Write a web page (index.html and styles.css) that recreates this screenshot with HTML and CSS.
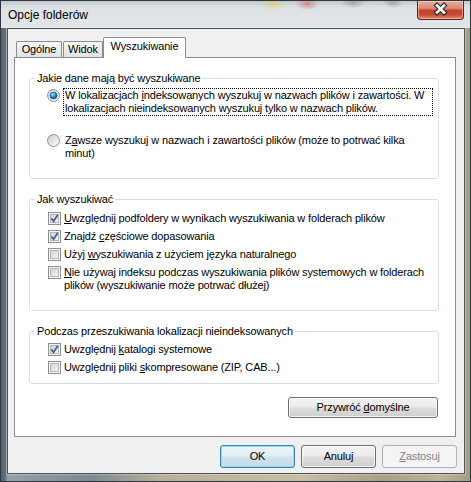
FILE: index.html
```html
<!DOCTYPE html>
<html lang="pl">
<head>
<meta charset="utf-8">
<title>Opcje folderów</title>
<link rel="stylesheet" href="styles.css">
</head>
<body>
<svg class="defs" width="0" height="0" aria-hidden="true">
  <defs>
    <linearGradient id="cbIn" x1="0" y1="0" x2="1" y2="1">
      <stop offset="0" stop-color="#cdd1d6"/>
      <stop offset="1" stop-color="#f7f7f7"/>
    </linearGradient>
    <linearGradient id="rdIn" x1="0" y1="0" x2="1" y2="1">
      <stop offset="0" stop-color="#c9cbcd"/>
      <stop offset="1" stop-color="#fbfbfb"/>
    </linearGradient>
    <radialGradient id="rdDot" cx="0.4" cy="0.35" r="0.7">
      <stop offset="0" stop-color="#b6ecff"/>
      <stop offset="0.45" stop-color="#2f8fd8"/>
      <stop offset="1" stop-color="#0d3f7c"/>
    </radialGradient>
  </defs>
</svg>
<div class="window">
  <div class="titlebar">
    <span class="title">Opcje folderów</span>
    <div class="close">
      <svg width="47" height="19" viewBox="0 0 47 19">
        <path d="M20 5.5 L27 12.5 M27 5.5 L20 12.5" stroke="#2d3034" stroke-width="5" stroke-linecap="square" fill="none"/>
        <path d="M20 5.5 L27 12.5 M27 5.5 L20 12.5" stroke="#ffffff" stroke-width="2.6" stroke-linecap="square" fill="none"/>
      </svg>
    </div>
  </div>
  <div class="frame">
    <div class="client">
      <div class="tabs">
        <div class="tab t-ogolne">Ogólne</div>
        <div class="tab t-widok">Widok</div>
        <div class="tab active t-wysz">Wyszukiwanie</div>
      </div>
      <div class="panel">
        <fieldset class="group g1">
          <legend>Jakie dane mają być wyszukiwane</legend>
          <div class="rrow">
            <svg class="radio" width="13" height="13" viewBox="0 0 13 13">
              <circle cx="6.5" cy="6.5" r="6" fill="url(#rdIn)" stroke="#8f9193"/>
              <circle cx="6.5" cy="6.5" r="4.6" fill="#f2f2f2"/>
              <circle cx="6.5" cy="6.5" r="3.6" fill="url(#rdDot)" stroke="#1c4f86" stroke-width="0.6"/>
            </svg>
            <span class="rlabel focus">W lokalizacjach <u>i</u>ndeksowanych wyszukuj w nazwach plików i zawartości. W<br>lokalizacjach nieindeksowanych wyszukuj tylko w nazwach plików.</span>
          </div>
          <div class="rrow second">
            <svg class="radio" width="13" height="13" viewBox="0 0 13 13">
              <circle cx="6.5" cy="6.5" r="6" fill="url(#rdIn)" stroke="#8f9193"/>
              <circle cx="6.5" cy="6.5" r="4.2" fill="url(#rdIn)" opacity="0.6"/>
            </svg>
            <span class="rlabel">Z<u>a</u>wsze wyszukuj w nazwach i zawartości plików (może to potrwać kilka<br>minut)</span>
          </div>
        </fieldset>

        <fieldset class="group g2">
          <legend>Jak wyszukiwać</legend>
          <div class="crow">
            <svg class="cb" width="13" height="13" viewBox="0 0 13 13">
              <rect x="0.5" y="0.5" width="12" height="12" fill="#f4f4f4" stroke="#8e8f8f"/>
              <rect x="2.5" y="2.5" width="8" height="8" fill="url(#cbIn)" stroke="#b3b7bc"/>
              <path d="M3.4 6.4 L5.6 9.2 L9.8 2.8" stroke="#4b5f96" stroke-width="1.8" fill="none"/>
            </svg>
            <span class="clabel"><u>U</u>względnij podfoldery w wynikach wyszukiwania w folderach plików</span>
          </div>
          <div class="crow">
            <svg class="cb" width="13" height="13" viewBox="0 0 13 13">
              <rect x="0.5" y="0.5" width="12" height="12" fill="#f4f4f4" stroke="#8e8f8f"/>
              <rect x="2.5" y="2.5" width="8" height="8" fill="url(#cbIn)" stroke="#b3b7bc"/>
              <path d="M3.4 6.4 L5.6 9.2 L9.8 2.8" stroke="#4b5f96" stroke-width="1.8" fill="none"/>
            </svg>
            <span class="clabel">Znajdź <u>c</u>zęściowe dopasowania</span>
          </div>
          <div class="crow">
            <svg class="cb" width="13" height="13" viewBox="0 0 13 13">
              <rect x="0.5" y="0.5" width="12" height="12" fill="#f4f4f4" stroke="#8e8f8f"/>
              <rect x="2.5" y="2.5" width="8" height="8" fill="url(#cbIn)" stroke="#b3b7bc"/>
            </svg>
            <span class="clabel">Użyj <u>w</u>yszukiwania z użyciem języka naturalnego</span>
          </div>
          <div class="crow">
            <svg class="cb" width="13" height="13" viewBox="0 0 13 13">
              <rect x="0.5" y="0.5" width="12" height="12" fill="#f4f4f4" stroke="#8e8f8f"/>
              <rect x="2.5" y="2.5" width="8" height="8" fill="url(#cbIn)" stroke="#b3b7bc"/>
            </svg>
            <span class="clabel"><u>N</u>ie używaj indeksu podczas wyszukiwania plików systemowych w folderach<br>plików (wyszukiwanie może potrwać dłużej)</span>
          </div>
        </fieldset>

        <fieldset class="group g3">
          <legend>Podczas przeszukiwania lokalizacji nieindeksowanych</legend>
          <div class="crow">
            <svg class="cb" width="13" height="13" viewBox="0 0 13 13">
              <rect x="0.5" y="0.5" width="12" height="12" fill="#f4f4f4" stroke="#8e8f8f"/>
              <rect x="2.5" y="2.5" width="8" height="8" fill="url(#cbIn)" stroke="#b3b7bc"/>
              <path d="M3.4 6.4 L5.6 9.2 L9.8 2.8" stroke="#4b5f96" stroke-width="1.8" fill="none"/>
            </svg>
            <span class="clabel">Uwzględnij <u>k</u>atalogi systemowe</span>
          </div>
          <div class="crow">
            <svg class="cb" width="13" height="13" viewBox="0 0 13 13">
              <rect x="0.5" y="0.5" width="12" height="12" fill="#f4f4f4" stroke="#8e8f8f"/>
              <rect x="2.5" y="2.5" width="8" height="8" fill="url(#cbIn)" stroke="#b3b7bc"/>
            </svg>
            <span class="clabel">Uwzględnij pliki <u>s</u>kompresowane (ZIP, CAB...)</span>
          </div>
        </fieldset>

        <button class="btn restore" type="button">Przywróć <u>d</u>omyślne</button>
      </div>
      <div class="buttons">
        <button class="btn default" type="button">OK</button>
        <button class="btn" type="button">Anuluj</button>
        <button class="btn disabled" type="button"><u>Z</u>astosuj</button>
      </div>
    </div>
  </div>
</div>
</body>
</html>
```
FILE: styles.css
```css
html, body {
  margin: 0;
  padding: 0;
  background: #ffffff;
}

body {
  font-family: "Liberation Sans", Arial, sans-serif;
  font-size: 11px;
  line-height: 13px;
  letter-spacing: -0.15px;
  color: #000000;
}

.defs {
  display: block;
  width: 0;
  height: 0;
  overflow: hidden;
}

u {
  text-decoration: underline;
  text-underline-offset: 1px;
}

.window {
  width: 471px;
  height: 482px;
  box-sizing: border-box;
  border: 1px solid #2c3740;
  display: flex;
  flex-direction: column;
  background: linear-gradient(90deg, #56636e 0, #65727d 5px, #95a0a8 6px, #7d8890 90px, #b7b09b 160px, #c6bea4 300px, #a89f85 380px, #bdb395 440px, #a59b80 100%);
}

.titlebar {
  height: 27px;
  display: flex;
  align-items: flex-start;
  background:
    radial-gradient(ellipse 12px 6px at 272px 3px, rgba(225, 205, 70, 0.55), rgba(225, 205, 70, 0)),
    radial-gradient(ellipse 12px 6px at 306px 3px, rgba(200, 70, 60, 0.5), rgba(200, 70, 60, 0)),
    radial-gradient(ellipse 12px 5px at 352px 2px, rgba(90, 90, 90, 0.35), rgba(90, 90, 90, 0)),
    radial-gradient(ellipse 10px 5px at 392px 2px, rgba(90, 90, 90, 0.35), rgba(90, 90, 90, 0)),
    linear-gradient(180deg, #c2c7cc 0, #dde1e4 6px, #e3e6e9 100%);
}

.title {
  flex: 1;
  padding: 7px 0 0 7px;
  font-size: 12px;
  line-height: 14px;
  letter-spacing: 0;
  color: #000000;
}

.close {
  width: 47px;
  height: 19px;
  margin-right: 6px;
  box-sizing: border-box;
  border: 1px solid #5a231b;
  border-top: none;
  border-radius: 0 0 4px 4px;
  background: linear-gradient(180deg, #e9ad9d 0, #dc8c77 40%, #c5432b 52%, #c94a31 75%, #e08a6e 100%);
  box-shadow: inset 0 0 0 1px rgba(255, 230, 220, 0.45);
  overflow: hidden;
}

.close svg {
  display: block;
  margin: -1px 0 0 -1px;
}

.frame {
  flex: 1;
  display: flex;
  padding: 0 5px 7px 6px;
}

.client {
  flex: 1;
  display: flex;
  flex-direction: column;
  border: 1px solid #47525b;
  background: #f0f0f0;
  padding: 8px 7px 5px 6px;
  box-shadow: 0 0 0 1px rgba(255, 255, 255, 0.3);
}

.tabs {
  display: flex;
  align-items: flex-end;
  height: 20px;
  padding-left: 2px;
}

.tab {
  box-sizing: border-box;
  height: 16px;
  border: 1px solid #898c95;
  border-bottom: none;
  border-radius: 2px 2px 0 0;
  background: linear-gradient(180deg, #f7f7f7 0, #ececec 50%, #e3e3e3 100%);
  text-align: center;
  line-height: 15px;
}

.t-ogolne {
  width: 46px;
}

.t-widok {
  width: 40px;
  margin-left: 1px;
}

.tab.active {
  width: 83px;
  height: 21px;
  margin-bottom: -1px;
  position: relative;
  z-index: 1;
  background: #ffffff;
  line-height: 17px;
}

.panel {
  flex: 1;
  display: flex;
  flex-direction: column;
  margin-right: 1px;
  border: 1px solid #898c95;
  background: #ffffff;
  padding: 14px 16px 0 14px;
}

.group {
  margin: 0;
  min-width: 0;
  border: 1px solid #d5dfe5;
  border-radius: 3px;
  padding: 0;
}

.group + .group {
  margin-top: 14px;
}

.group legend {
  margin-left: 5px;
  padding: 0 2px;
  line-height: 13px;
  color: #000000;
}

.g1 {
  padding: 3px 5px 17px 0;
}

.g2 {
  padding: 6px 0 18px 0;
}

.g3 {
  padding: 5px 0 9px 0;
}

.rrow {
  display: flex;
  align-items: flex-start;
  margin-left: 17px;
}

.rrow.second {
  margin-top: 17px;
}

.radio {
  display: block;
  flex: none;
  margin-top: 1px;
}

.rlabel {
  flex: 1;
  margin-left: 3px;
  padding-left: 1px;
  border: 1px solid transparent;
  white-space: nowrap;
}

.rlabel.focus {
  border: 1px dotted #000000;
}

.crow {
  display: flex;
  align-items: flex-start;
  margin-left: 18px;
}

.crow + .crow {
  margin-top: 5px;
}

.cb {
  display: block;
  flex: none;
}

.clabel {
  margin-left: 3px;
  white-space: nowrap;
}

.btn {
  box-sizing: border-box;
  height: 23px;
  width: 75px;
  padding: 0;
  font-family: "Liberation Sans", Arial, sans-serif;
  font-size: 11px;
  line-height: 13px;
  letter-spacing: -0.15px;
  color: #000000;
  border: 1px solid #707070;
  border-radius: 3px;
  background: linear-gradient(180deg, #f3f3f3 0, #ebebeb 48%, #dddddd 52%, #cfcfcf 100%);
  box-shadow: inset 0 0 0 1px rgba(255, 255, 255, 0.7);
}

.btn.restore {
  align-self: flex-end;
  width: 150px;
  height: 21px;
  margin-top: 13px;
  margin-right: 1px;
}

.buttons {
  display: flex;
  justify-content: flex-end;
  gap: 6px;
  margin-top: 8px;
}

.btn.default {
  border-color: #3c7fb1;
  background: linear-gradient(180deg, #ecf5fa 0, #e1edf4 48%, #cfe3ee 52%, #c3dbe8 100%);
  box-shadow: inset 0 0 0 1px #8fdcf6;
}

.btn.disabled {
  color: #838383;
  border-color: #adb2b5;
  background: #f4f4f4;
  box-shadow: none;
}
```
